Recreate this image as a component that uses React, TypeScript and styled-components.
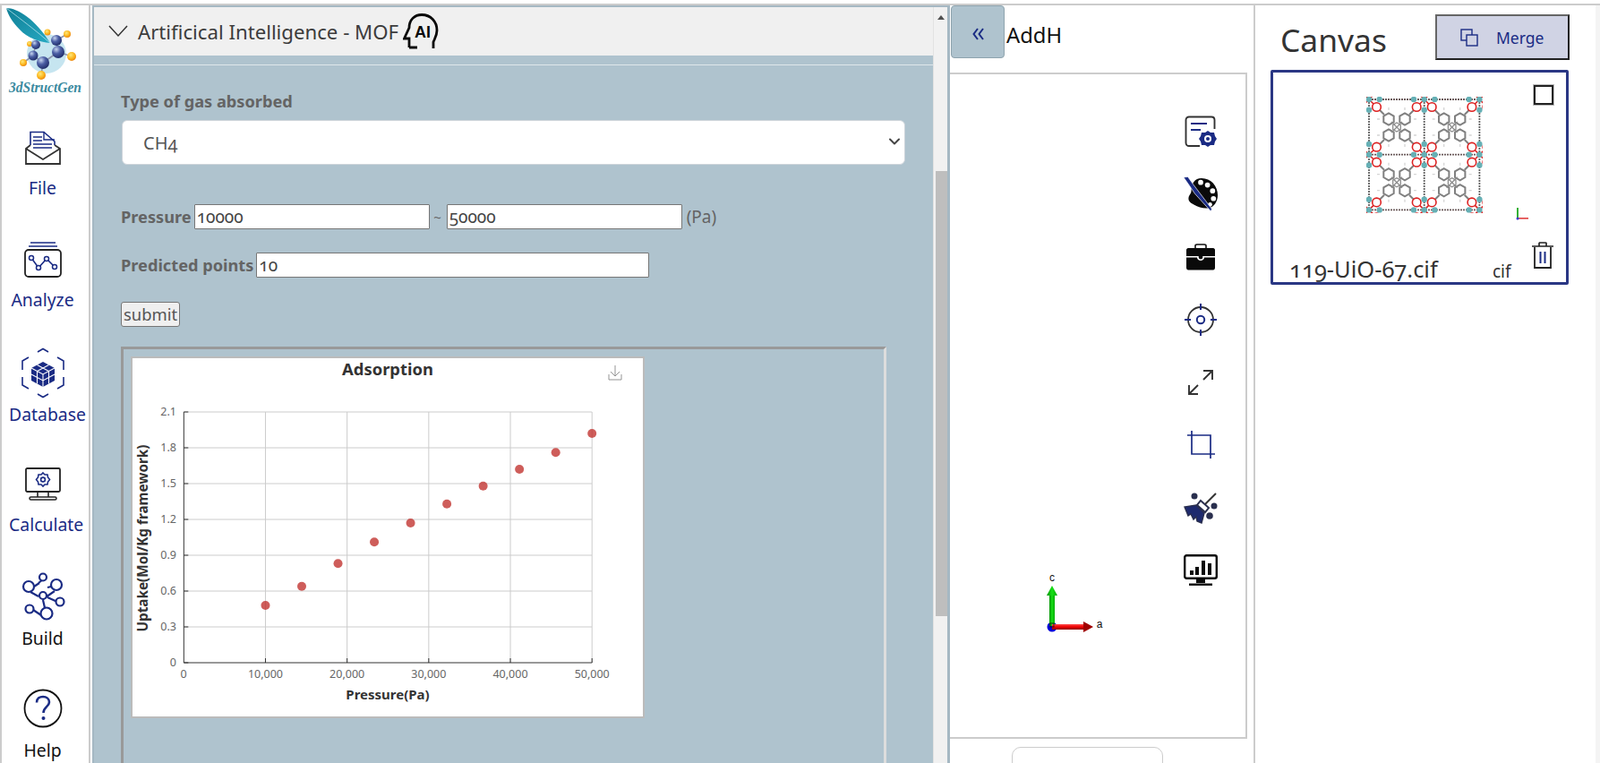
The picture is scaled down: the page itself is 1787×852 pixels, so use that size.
import React from 'react';
import styled, { createGlobalStyle } from 'styled-components';
import { ChevronDown } from 'lucide-react';

const NAVY = '#1a2b84';
const PANEL = '#afc3ce';

const GlobalStyle = createGlobalStyle`
  html, body {
    margin: 0;
    padding: 0;
    background: white;
    overflow: hidden;
  }
  * {
    box-sizing: border-box;
  }
  body, input, select, button {
    font-family: "Noto Sans", "Open Sans", sans-serif;
    font-variant-numeric: oldstyle-nums;
  }
`;

const Page = styled.div`
  display: flex;
  height: 852px;
  padding-top: 4px;
  overflow: hidden;
`;

const Frame = styled.div`
  display: flex;
  flex: 1;
  min-width: 0;
  border-top: 2px solid #ccc;
  border-left: 2px solid #ccc;
`;

const Sidebar = styled.nav`
  width: 99px;
  flex: none;
  border-right: 2px solid #ccc;
  padding-right: 6px;
  display: flex;
  flex-direction: column;
  align-items: center;
  overflow: hidden;
`;

const LogoBox = styled.div`
  width: 97px;
  height: 100px;
  flex: none;
  align-self: flex-start;
`;

const NavItem = styled.div<{ $top: number; $gap: number }>`
  display: flex;
  flex-direction: column;
  align-items: center;
  align-self: stretch;
  flex: none;
  margin-top: ${p => p.$top}px;
  gap: ${p => p.$gap}px;
`;

const NavLabel = styled.span<{ $dark?: boolean; $wide?: boolean }>`
  font-size: 19.4px;
  line-height: 26px;
  white-space: nowrap;
  color: ${p => (p.$dark ? '#111' : NAVY)};
  ${p => p.$wide && 'align-self: flex-start; padding-left: 8px;'}
`;

const Main = styled.section`
  width: 958px;
  flex: none;
  margin-left: 2px;
  display: flex;
  overflow: hidden;
  border-top: 2px solid #a5b8c3;
  border-left: 2px solid #a5b8c3;
  border-right: 3px solid #a5b8c3;
`;

const MainBody = styled.div`
  flex: 1;
  min-width: 0;
  background: ${PANEL};
  overflow: hidden;
`;

const AccordionHead = styled.header`
  height: 54px;
  background: #f0f0f0;
  display: flex;
  align-items: center;
  padding-left: 16px;
  color: #3c3c3c;
  font-size: 22.2px;
`;

const HeadTitle = styled.span`
  margin-left: 11px;
  margin-right: 5px;
  white-space: nowrap;
`;

const Rule = styled.div`
  height: 1px;
  margin-top: 10px;
  background: #dfe7eb;
`;

const Form = styled.div`
  padding: 28px 30px 0 30px;
`;

const FieldLabel = styled.label`
  font-size: 18.2px;
  font-weight: 700;
  color: #646464;
  white-space: nowrap;
`;

const SelectWrap = styled.div`
  position: relative;
  margin-top: 9px;
  width: 875px;
  margin-left: 1px;
`;

const GasSelect = styled.select`
  appearance: none;
  display: block;
  width: 100%;
  height: 50px;
  border: 1px solid #ced4da;
  border-radius: 6px;
  background: white;
  padding-left: 23px;
  font-size: 20px;
  color: #555;
`;

const SelectArrow = styled.span`
  position: absolute;
  right: 2px;
  top: 14px;
  color: #444;
  line-height: 0;
`;

const Row = styled.div<{ $top: number }>`
  display: flex;
  align-items: center;
  margin-top: ${p => p.$top}px;
  height: 28px;
`;

const NumberInput = styled.input<{ $width: number }>`
  width: ${p => p.$width}px;
  height: 28px;
  flex: none;
  margin-left: 3px;
  padding: 0 2px;
  border: 1px solid #767676;
  border-radius: 1px;
  background: white;
  font-size: 19px;
  color: #444;
`;

const Tilde = styled.span`
  width: 16px;
  padding-left: 2px;
  text-align: center;
  color: #666;
  font-size: 15px;
`;

const Unit = styled.span`
  margin-left: 5px;
  font-size: 19px;
  color: #646464;
`;

const SubmitButton = styled.button`
  display: block;
  width: 66px;
  height: 28px;
  margin-top: 27px;
  padding: 0;
  border: 1px solid #767676;
  border-radius: 3px;
  background: #efefef;
  font-size: 18.4px;
  line-height: 24px;
  color: #555;
`;

const ResultFrame = styled.div`
  width: 855px;
  height: 520px;
  margin-top: 22px;
  padding: 10px;
  border-top: 3px solid #999;
  border-left: 3px solid #999;
  border-right: 3px solid #ddd;
`;

const ChartCard = styled.div`
  width: 570px;
  height: 400px;
  background: white;
  box-shadow: 0 0 0 2px #bbb;
`;

const ScrollTrack = styled.div`
  width: 16px;
  flex: none;
  background: #f1f1f1;
  border-left: 1px solid #e2e2e2;
  padding-left: 2px;
`;

const ScrollArrow = styled.div`
  height: 183px;
  padding: 9px 0 0 2px;
`;

const ArrowUp = styled.div`
  width: 0;
  height: 0;
  border-left: 4px solid transparent;
  border-right: 4px solid transparent;
  border-bottom: 5px solid #505050;
`;

const ScrollThumb = styled.div`
  height: 497px;
  background: #bebebe;
`;

const Viewer = styled.section`
  width: 339px;
  flex: none;
  display: flex;
  flex-direction: column;
  overflow: hidden;
`;

const ViewerHead = styled.div`
  display: flex;
  align-items: center;
  height: 75px;
  padding-bottom: 16px;
`;

const CollapseButton = styled.button`
  width: 60px;
  height: 59px;
  margin-left: 1px;
  display: flex;
  align-items: center;
  justify-content: center;
  border: 1px solid #8ea3ae;
  border-radius: 4px;
  background: ${PANEL};
  padding: 4px 0 0;
`;

const ViewerTitle = styled.span`
  margin: 7px 0 0 2px;
  font-size: 23.8px;
  color: #111;
`;

const ViewerBox = styled.div`
  position: relative;
  width: 332px;
  height: 744px;
  flex: none;
  border: 2px solid #ccc;
  border-left: 0;
  display: flex;
  flex-direction: column;
  align-items: flex-end;
  padding: 29px 30px 0 0;
`;

const ToolIcon = styled.div`
  width: 40px;
  height: 70px;
  flex: none;
  display: flex;
  align-items: center;
  justify-content: center;
`;

const AxisMark = styled.div`
  position: absolute;
  left: 95px;
  top: 552px;
  line-height: 0;
`;

const ViewerAction = styled.div`
  width: 169px;
  height: 60px;
  flex: none;
  margin: 9px 0 0 69px;
  border: 1px solid #ccc;
  border-radius: 10px;
`;

const CanvasPane = styled.aside`
  flex: 1;
  min-width: 0;
  border-left: 2px solid #ccc;
  border-right: 5px solid #f4f4f4;
  padding: 10px 0 0 17px;
`;

const CanvasHead = styled.div`
  display: flex;
  align-items: center;
  height: 51px;
`;

const CanvasTitle = styled.h2`
  margin: 4px 0 0 11px;
  width: 173px;
  font-size: 35.4px;
  font-weight: 400;
  line-height: 44px;
  color: #333;
`;

const MergeButton = styled.button`
  width: 150px;
  height: 51px;
  display: flex;
  align-items: center;
  padding: 0 0 0 26px;
  gap: 20px;
  background: #d0d3e4;
  border: 2px solid #222;
  border-top-color: #666;
  border-left-color: #666;
  color: ${NAVY};
  font-size: 17.5px;
`;

const StructureCard = styled.article`
  position: relative;
  width: 333px;
  height: 240px;
  margin-top: 11px;
  border: 3px solid #2a3784;
  border-radius: 2px;
  display: flex;
  flex-direction: column;
  align-items: flex-start;
  overflow: hidden;
`;

const Thumb = styled.div`
  margin: 27px 0 3px 104px;
  width: 130px;
  height: 130px;
  flex: none;
  line-height: 0;
`;

const SelectBox = styled.span`
  position: absolute;
  top: 14px;
  right: 14px;
  width: 22px;
  height: 22px;
  background: white;
  border: 2px solid #222;
  box-shadow: 0 0 0 1px #bbb;
`;

const MiniAxis = styled.span`
  position: absolute;
  left: 271px;
  top: 150px;
  line-height: 0;
`;

const TrashButton = styled.span`
  position: absolute;
  right: 14px;
  top: 189px;
  line-height: 0;
`;

const CardFooter = styled.div`
  display: flex;
  align-items: baseline;
  margin: 44px 0 0 18px;
  color: #333;
`;

const FileName = styled.span`
  width: 227px;
  font-size: 25.5px;
  line-height: 30px;
  white-space: nowrap;
`;

const FileExt = styled.span`
  font-size: 19px;
`;

/* sidebar drawings */

const Logo = () => (
  <svg width="97" height="100" viewBox="2 6 97 100">
    <defs>
      <radialGradient id="ballNavy" cx="35%" cy="30%" r="75%">
        <stop offset="0%" stopColor="#c6d4ef" />
        <stop offset="45%" stopColor="#4c5fa5" />
        <stop offset="100%" stopColor="#1e2a66" />
      </radialGradient>
      <radialGradient id="ballGold" cx="40%" cy="35%" r="70%">
        <stop offset="0%" stopColor="#ffe87a" />
        <stop offset="60%" stopColor="#fbb51c" />
        <stop offset="100%" stopColor="#ea7f10" />
      </radialGradient>
      <linearGradient id="featherFill" x1="0" y1="0" x2="1" y2="1">
        <stop offset="0%" stopColor="#0f7f96" />
        <stop offset="100%" stopColor="#27a9c2" />
      </linearGradient>
    </defs>
    <circle cx="52" cy="60" r="22" fill="#c6e5f0" />
    <path d="M7 9 C20 9 40 22 56 48 C44 47 30 42 22 33 C14 25 9 17 7 9 Z" fill="url(#featherFill)" />
    <path d="M7 9 C24 22 40 34 56 48" stroke="#c9ecf3" strokeWidth="0.7" fill="none" />
    <g stroke="#8d95ad" strokeWidth="1.6">
      <line x1="63" y1="45" x2="65" y2="58" />
      <line x1="40" y1="50" x2="37" y2="62" />
      <line x1="37" y1="62" x2="48" y2="70" />
      <line x1="65" y1="58" x2="48" y2="70" />
      <line x1="65" y1="58" x2="80" y2="63" />
      <line x1="37" y1="62" x2="26" y2="70" />
      <line x1="48" y1="70" x2="46" y2="84" />
      <line x1="63" y1="45" x2="75" y2="38" />
      <line x1="40" y1="50" x2="33" y2="49" />
    </g>
    <circle cx="53" cy="36" r="3.5" fill="url(#ballGold)" />
    <circle cx="75" cy="38" r="4" fill="url(#ballGold)" />
    <circle cx="33" cy="49" r="3" fill="url(#ballGold)" />
    <circle cx="26" cy="70" r="4" fill="url(#ballGold)" />
    <circle cx="80" cy="63" r="5" fill="url(#ballGold)" />
    <circle cx="46" cy="84" r="5" fill="url(#ballGold)" />
    <circle cx="63" cy="45" r="6" fill="url(#ballNavy)" />
    <circle cx="40" cy="50" r="5" fill="url(#ballNavy)" />
    <circle cx="65" cy="58" r="7" fill="url(#ballNavy)" />
    <circle cx="37" cy="62" r="5.5" fill="url(#ballNavy)" />
    <circle cx="48" cy="70" r="7" fill="url(#ballNavy)" />
    <text x="10" y="103" fontFamily="Liberation Serif, serif" fontStyle="italic" fontWeight="700" fontSize="16.5" fill="#3b8a9f" textLength="81" lengthAdjust="spacingAndGlyphs" style={{ fontVariantNumeric: 'lining-nums' }}>3dStructGen</text>
  </svg>
);

const FileIcon = () => (
  <svg width="40" height="38" viewBox="0 0 40 38" fill="none">
    <path d="M6 16 V1.5 H21 L33 12 V16" fill="white" stroke={NAVY} strokeWidth="1.6" />
    <path d="M21 1.5 V10 H33" stroke={NAVY} strokeWidth="1.4" />
    <path d="M9 7 H19 M9 11 H19 M9 15 H30 M9 19 H30" stroke={NAVY} strokeWidth="1.6" />
    <path d="M6 16 L1 20 V37 H39 V20 L33 16" stroke="#333" strokeWidth="1.8" />
    <path d="M1 20 L20 32 L39 20" stroke="#333" strokeWidth="1.8" />
  </svg>
);

const AnalyzeIcon = () => (
  <svg width="42" height="40" viewBox="0 0 42 40" fill="none">
    <path d="M7 1 H35 M5 5 H37" stroke={NAVY} strokeWidth="1.5" />
    <rect x="1" y="9" width="40" height="30" rx="4" stroke="#222" strokeWidth="1.8" />
    <path d="M8 18 L16 29 L25 19 L34 28" stroke={NAVY} strokeWidth="1.6" />
    <g fill="white" stroke={NAVY} strokeWidth="1.5">
      <circle cx="8" cy="18" r="2.5" />
      <circle cx="16" cy="29" r="2.5" />
      <circle cx="25" cy="19" r="2.5" />
      <circle cx="34" cy="28" r="2.5" />
    </g>
  </svg>
);

const DatabaseIcon = () => (
  <svg width="50" height="57" viewBox="0 0 50 57" fill="none">
    <path d="M19 5 L25 1.5 L31 5 M41 11 L48 15 V25 M48 33 V42 L41 46 M31 52 L25 55.5 L19 52 M9 46 L2 42 V33 M2 25 V15 L9 11" stroke={NAVY} strokeWidth="1.6" />
    <path d="M25 16 L38 23 V37 L25 44 L12 37 V23 Z" fill={NAVY} />
    <path d="M12 23 L25 30 L38 23 M25 30 V44 M18.5 19.5 L31.5 26.5 M31.5 19.5 L18.5 26.5 M18.5 26.5 V40.5 M31.5 26.5 V40.5 M12 30 L25 37 L38 30" stroke="white" strokeWidth="1.1" />
  </svg>
);

const CalculateIcon = () => (
  <svg width="40" height="37" viewBox="0 0 40 37" fill="none">
    <rect x="1" y="1" width="38" height="26" rx="1.5" stroke="#222" strokeWidth="1.8" />
    <path d="M14 27 V33 M26 27 V33" stroke="#222" strokeWidth="1.6" />
    <rect x="5" y="33" width="30" height="3" rx="1.5" fill="white" stroke="#222" strokeWidth="1.5" />
    <path d="M20 6 L22 8 L25 8 L25.5 11 L27.5 13.5 L25.5 16 L25 19 L22 19 L20 21 L18 19 L15 19 L14.5 16 L12.5 13.5 L14.5 11 L15 8 L18 8 Z" stroke={NAVY} strokeWidth="1.6" />
    <circle cx="20" cy="13.5" r="2.4" stroke={NAVY} strokeWidth="1.6" />
  </svg>
);

const BuildIcon = () => (
  <svg width="50" height="54" viewBox="0 0 50 54" fill="none" stroke={NAVY} strokeWidth="2.2">
    <path d="M12 18 L21 12 M20 12 L25 8 M30 17 L38 15 M11 22 L20 27 M25 30 L38 21 M30 28 L41 33 M25 31 L28 44 M14 42 L23 48" />
    <circle cx="25" cy="5.5" r="4" fill="white" />
    <circle cx="9" cy="16" r="6" fill="white" />
    <circle cx="40" cy="14" r="6" fill="white" />
    <circle cx="25" cy="26" r="4" fill="white" />
    <circle cx="44" cy="33" r="4.5" fill="white" />
    <circle cx="10" cy="41" r="4.5" fill="white" />
    <circle cx="29" cy="46" r="6.5" fill="white" />
  </svg>
);

const HelpIcon = () => (
  <svg width="44" height="44" viewBox="0 0 44 44" fill="none">
    <circle cx="22" cy="22" r="20.5" stroke="#111" strokeWidth="1.8" />
    <path d="M15 15.5 C15 10.5 18.5 9 22 9 C26 9 29 11.5 29 15 C29 20 22.5 20.5 22.5 27" stroke={NAVY} strokeWidth="2.6" />
    <circle cx="22.5" cy="33" r="2" fill={NAVY} />
  </svg>
);

const AiHeadIcon = () => (
  <svg width="40" height="40" viewBox="0 0 40 40" fill="none">
    <path d="M7 38 H16 M7 38 V28 H1.5 L7 16 C7 7 13 1.5 21 1.5 C31 1.5 38 9 38 19 C38 25 35 29 34 32 V39" stroke="#0a0a0a" strokeWidth="2.8" />
    <text x="22" y="27" textAnchor="middle" fontFamily="Liberation Sans, sans-serif" fontWeight="700" fontSize="18" fill="#0a0a0a">AI</text>
  </svg>
);

const DoubleLeft = () => (
  <svg width="13" height="14" viewBox="0 0 13 14" fill="none" stroke={NAVY} strokeWidth="2">
    <path d="M6 1 L1.5 7 L6 13 M12 1 L7.5 7 L12 13" />
  </svg>
);

/* viewer tools */

const SettingsDocIcon = () => (
  <svg width="36" height="36" viewBox="0 0 36 36" fill="none">
    <path d="M17 34 H5 C3 34 1.5 32.5 1.5 30.5 V5 C1.5 3 3 1.5 5 1.5 H30 C32 1.5 33.5 3 33.5 5 V15" stroke="#333" strokeWidth="1.9" />
    <path d="M7 9 H25 M7 16 H18" stroke={NAVY} strokeWidth="2" />
    <path d="M26 17 L29 19 L33 19 L34 23 L36 26 L34 29 L33 33 L29 33 L26 35 L23 33 L19 33 L18 29 L16 26 L18 23 L19 19 L23 19 Z" fill={NAVY} />
    <circle cx="26" cy="26" r="4" fill="white" />
    <circle cx="26" cy="26" r="2" fill={NAVY} />
  </svg>
);

const PaletteIcon = () => (
  <svg width="42" height="42" viewBox="0 0 42 42">
    <path d="M22 2 C33 2 41 11 41 22 C41 30 36 36 31 37 C24 38 19 36 13 33 C8 31 6 28 7 24 C8 21 10 20 10 17 C10 8 14 2 22 2 Z" fill="#0a0a0a" />
    <g fill="white">
      <circle cx="21" cy="7" r="3" />
      <circle cx="29" cy="10" r="3" />
      <circle cx="35" cy="17" r="3" />
      <circle cx="36" cy="26" r="3" />
      <circle cx="32" cy="33" r="2.5" />
    </g>
    <path d="M1 1 L6 0.5 L12 9 L34 38 L33 41 L14 20 L8 11 Z" fill={NAVY} stroke="white" strokeWidth="0.7" />
  </svg>
);

const CaseIcon = () => (
  <svg width="32" height="30" viewBox="0 0 32 30">
    <path d="M10 6 V2.5 C10 1.5 11 1 12 1 H20 C21 1 22 1.5 22 2.5 V6" fill="none" stroke="#111" strokeWidth="1.6" />
    <path d="M2 5 H30 C31 5 32 6 32 7 V14 H0 V7 C0 6 1 5 2 5 Z" fill="#0a0a0a" />
    <path d="M0 15.5 H12 C12 20 20 20 20 15.5 H32 V27 C32 28.5 31 29.5 30 29.5 H2 C1 29.5 0 28.5 0 27 Z" fill="#0a0a0a" />
    <circle cx="16" cy="15" r="2.4" fill="#0a0a0a" />
  </svg>
);

const TargetIcon = () => (
  <svg width="38" height="38" viewBox="0 0 38 38" fill="none">
    <circle cx="19" cy="19" r="14" stroke="#333" strokeWidth="1.8" />
    <circle cx="19" cy="19" r="4.2" stroke={NAVY} strokeWidth="2" />
    <path d="M19 1 V8 M19 30 V37 M1 19 H8 M30 19 H37" stroke={NAVY} strokeWidth="2" />
  </svg>
);

const ExpandIcon = () => (
  <svg width="30" height="30" viewBox="0 0 30 30" fill="none" stroke="#333" strokeWidth="1.9">
    <path d="M18 12 L28 2 M18 2 H28 V12 M12 18 L2 28 M2 18 V28 H12" />
  </svg>
);

const CropIcon = () => (
  <svg width="32" height="32" viewBox="0 0 32 32" fill="none" stroke={NAVY} strokeWidth="1.7">
    <path d="M1 5 H27 V31 M6 0 V26 H32" />
  </svg>
);

const BroomIcon = () => (
  <svg width="38" height="36" viewBox="0 0 38 36">
    <line x1="24" y1="14" x2="36" y2="2" stroke="#333" strokeWidth="2" />
    <path d="M19 10 L28 18 L24 23 L15 15 Z" fill="white" stroke="#2a2f4e" strokeWidth="2" />
    <path d="M14 15 L23 24 L20 35 L15 33 L14 28 L11 31 L8 25 L5 27 L1 17 Z" fill="#1e2a6e" stroke="#2a2f4e" strokeWidth="1.4" />
    <circle cx="12" cy="5" r="3.5" fill="#2a2f4e" />
    <circle cx="34" cy="16" r="3.5" fill="#2a2f4e" />
    <circle cx="29" cy="27" r="3.8" fill="#2a2f4e" />
  </svg>
);

const StatsIcon = () => (
  <svg width="38" height="36" viewBox="0 0 38 36" fill="none">
    <rect x="1.2" y="1.2" width="35.6" height="25.6" rx="2" stroke="#0a0a0a" strokeWidth="2.4" />
    <path d="M7 18 H11 V23 H7 Z M13 14 H17 V23 H13 Z M20 7 H24 V23 H20 Z M27 10 H31 V23 H27 Z" fill="#0a0a0a" />
    <path d="M14 28 H24 V32 H14 Z" fill="#0a0a0a" />
    <rect x="6" y="32.5" width="26" height="2.4" fill="#0a0a0a" />
  </svg>
);

const AxisGizmo = () => (
  <svg width="80" height="76" viewBox="0 -6 80 76">
    <defs>
      <linearGradient id="arrowRed" x1="0" y1="0" x2="0" y2="1">
        <stop offset="0%" stopColor="#ff5050" />
        <stop offset="50%" stopColor="#ef0000" />
        <stop offset="100%" stopColor="#8a0000" />
      </linearGradient>
      <linearGradient id="arrowGreen" x1="0" y1="0" x2="1" y2="0">
        <stop offset="0%" stopColor="#009000" />
        <stop offset="50%" stopColor="#16e016" />
        <stop offset="100%" stopColor="#00a800" />
      </linearGradient>
    </defs>
    <circle cx="19" cy="59" r="5.5" fill="#0000d8" />
    <rect x="16" y="24" width="6" height="34" fill="url(#arrowGreen)" />
    <path d="M13 24 L19 13 L25 24 Z" fill="url(#arrowGreen)" />
    <rect x="19" y="56" width="35" height="6" fill="url(#arrowRed)" />
    <path d="M54 53 L65 59 L54 65 Z" fill="#a00000" />
    <rect x="17" y="55" width="4" height="4" fill="none" stroke="#111" strokeWidth="0.8" />
    <text x="19" y="8" textAnchor="middle" fontFamily="Liberation Sans, sans-serif" fontSize="12" fill="#111">c</text>
    <text x="72" y="60" textAnchor="middle" fontFamily="Liberation Sans, sans-serif" fontSize="12" fill="#111">a</text>
  </svg>
);

/* canvas pane */

const MergeIcon = () => (
  <svg width="20" height="20" viewBox="0 0 20 20" fill="none" stroke={NAVY} strokeWidth="1.4">
    <rect x="1" y="1" width="12" height="12" />
    <rect x="7" y="7" width="12" height="12" fill="#d0d3e4" />
  </svg>
);

const TrashIcon = () => (
  <svg width="24" height="30" viewBox="0 0 24 30" fill="none">
    <path d="M0 5 H24 M8 5 V2 C8 1 9 1 9 1 H15 C15 1 16 1 16 1.5 V5" stroke="#222" strokeWidth="1.7" />
    <path d="M3 6 V29 H21 V6" stroke="#222" strokeWidth="1.8" />
    <path d="M9.5 11 V24 M14.5 11 V24" stroke={NAVY} strokeWidth="2" />
  </svg>
);

const MiniAxisIcon = () => (
  <svg width="16" height="16" viewBox="0 0 16 16">
    <rect x="1" y="1" width="2" height="12" fill="#35b035" />
    <rect x="2" y="12" width="12" height="1.6" fill="#e04040" />
    <circle cx="2" cy="13" r="1.5" fill="#3a3ad0" />
  </svg>
);

const CELL = 61.7;
const HEXES: Array<[number, number]> = [[22, 22], [40, 22], [22, 40], [40, 40]];
const hexPoints = (cx: number, cy: number, r: number) =>
  Array.from({ length: 6 }, (_, i) => {
    const a = (Math.PI / 3) * i + Math.PI / 6;
    return `${(cx + r * Math.cos(a)).toFixed(1)},${(cy + r * Math.sin(a)).toFixed(1)}`;
  }).join(' ');

const Linker = ({ x, y }: { x: number; y: number }) => (
  <g transform={`translate(${x} ${y})`}>
    <g fill="none" stroke="#808080" strokeWidth="2">
      {HEXES.map(([cx, cy]) => (
        <polygon key={`${cx}-${cy}`} points={hexPoints(cx, cy, 6.6)} />
      ))}
      <path d="M17 17 L12 12 M45 17 L50 12 M17 45 L12 50 M45 45 L50 50" />
    </g>
    <g fill="none" stroke="#8c8c8c" strokeWidth="1.3">
      <polygon points={hexPoints(31, 31, 5)} />
      <path d="M25 25 L37 37 M37 25 L25 37" />
    </g>
    <path d="M22 12 V9 M40 12 V9 M12 22 H9 M50 22 H53 M12 40 H9 M50 40 H53 M22 50 V53 M40 50 V53" stroke="#d5d5d5" strokeWidth="1.3" />
  </g>
);

const Corner = ({ x, y }: { x: number; y: number }) => (
  <g transform={`translate(${x} ${y})`}>
    <g fill="none" stroke="#dc2020" strokeWidth="1.6">
      {[[-1, -1], [1, -1], [-1, 1], [1, 1]].map(([sx, sy]) => (
        <g key={`${sx}${sy}`}>
          <circle cx={sx * 8.5} cy={sy * 8.5} r="4.8" />
          <path d={`M0 0 L${sx * 5} ${sy * 5}`} />
        </g>
      ))}
    </g>
  </g>
);

const Nodes = ({ x, y }: { x: number; y: number }) => (
  <g transform={`translate(${x} ${y})`} fill="#66b0b5">
    {[[0, 0], [11.7, 0], [-11.7, 0], [0, 11.7], [0, -11.7]].map(([dx, dy]) => (
      <circle key={`${dx}/${dy}`} cx={dx} cy={dy} r="3.2" />
    ))}
  </g>
);

const MoleculeThumb = () => {
  const stops = [0, CELL, CELL * 2];
  return (
    <svg width="130" height="130" viewBox="-3 -3 130 130">
      <defs>
        <clipPath id="cellClip">
          <rect x="-3" y="-3" width="130" height="130" />
        </clipPath>
        <filter id="soft">
          <feGaussianBlur stdDeviation="0.3" />
        </filter>
      </defs>
      <g filter="url(#soft)" clipPath="url(#cellClip)">
        {stops.map(s => (
          <g key={s}>
            <line x1="0" y1={s} x2="123.4" y2={s} stroke="#6c5c5c" strokeWidth="1.8" strokeDasharray="2 1" />
            <line x1={s} y1="0" x2={s} y2="123.4" stroke="#626262" strokeWidth="1.8" strokeDasharray="2 1" />
          </g>
        ))}
        <Linker x={0} y={0} />
        <Linker x={CELL} y={0} />
        <Linker x={0} y={CELL} />
        <Linker x={CELL} y={CELL} />
        {stops.map(x => stops.map(y => (
          <Corner key={`c${x}-${y}`} x={x} y={y} />
        )))}
        {stops.map(x => stops.map(y => (
          <Nodes key={`n${x}-${y}`} x={x} y={y} />
        )))}
      </g>
    </svg>
  );
};

/* chart */

const PLOT = { left: 57.3, right: 513.2, top: 60, bottom: 340 };
const UPTAKE = [0.48, 0.64, 0.83, 1.01, 1.17, 1.33, 1.48, 1.62, 1.76, 1.92];
const xPos = (v: number) => PLOT.left + (v / 50000) * (PLOT.right - PLOT.left);
const yPos = (v: number) => PLOT.bottom - (v / 2.1) * (PLOT.bottom - PLOT.top);

const AdsorptionChart = () => (
  <svg width="570" height="400" viewBox="0 0 570 400" style={{ display: 'block', fontFamily: '"Noto Sans", sans-serif', fontVariantNumeric: 'lining-nums' }}>
    <text x="285" y="19" textAnchor="middle" fontSize="18.4" fontWeight="700" fill="#333">Adsorption</text>
    <path d="M539 8 V20 M534 15 L539 20 L544 15 M532 18 V24 H546 V18" fill="none" stroke="#888" strokeWidth="0.9" />
    {[0.3, 0.6, 0.9, 1.2, 1.5, 1.8, 2.1].map(v => (
      <line key={v} x1={PLOT.left} x2={PLOT.right} y1={yPos(v)} y2={yPos(v)} stroke="#ccc" strokeWidth="1" />
    ))}
    {[10000, 20000, 30000, 40000, 50000].map(v => (
      <g key={v}>
        <line x1={xPos(v)} x2={xPos(v)} y1={PLOT.top} y2={PLOT.bottom} stroke="#ccc" strokeWidth="1" />
        <line x1={xPos(v)} x2={xPos(v)} y1={PLOT.bottom - 5} y2={PLOT.bottom} stroke="#333" strokeWidth="1" />
        <text x={xPos(v)} y={357} textAnchor="middle" fontSize="12.5" fill="#666">{v.toLocaleString('en-US')}</text>
      </g>
    ))}
    <line x1={PLOT.left} x2={PLOT.left} y1={PLOT.top} y2={PLOT.bottom} stroke="#333" strokeWidth="1" />
    <line x1={PLOT.left} x2={PLOT.right} y1={PLOT.bottom} y2={PLOT.bottom} stroke="#333" strokeWidth="1" />
    {[0, 0.3, 0.6, 0.9, 1.2, 1.5, 1.8, 2.1].map(v => (
      <g key={v}>
        <line x1={PLOT.left} x2={PLOT.left + 5} y1={yPos(v)} y2={yPos(v)} stroke="#333" strokeWidth="1" />
        <text x="49" y={yPos(v) + 4} textAnchor="end" fontSize="12.5" fill="#666">{v}</text>
      </g>
    ))}
    <text x="57" y="357" textAnchor="middle" fontSize="12.5" fill="#666">0</text>
    {UPTAKE.map((v, i) => (
      <circle key={v} cx={xPos(10000 + i * (40000 / 9))} cy={yPos(v)} r="5" fill="#c23531" fillOpacity="0.8" />
    ))}
    <text x="285" y="381" textAnchor="middle" fontSize="15" fontWeight="700" fill="#333">Pressure(Pa)</text>
    <text transform="translate(17 201) rotate(-90)" textAnchor="middle" fontSize="15.3" fontWeight="700" fill="#333">Uptake(Mol/Kg framework)</text>
  </svg>
);

const App = () => (
  <>
    <GlobalStyle />
    <Page>
      <Frame>
        <Sidebar>
          <LogoBox><Logo /></LogoBox>
          <NavItem $top={40} $gap={13}>
            <FileIcon />
            <NavLabel>File</NavLabel>
          </NavItem>
          <NavItem $top={47} $gap={12}>
            <AnalyzeIcon />
            <NavLabel>Analyze</NavLabel>
          </NavItem>
          <NavItem $top={40} $gap={5}>
            <DatabaseIcon />
            <NavLabel $wide>Database</NavLabel>
          </NavItem>
          <NavItem $top={46} $gap={14}>
            <CalculateIcon />
            <NavLabel $wide>Calculate</NavLabel>
          </NavItem>
          <NavItem $top={40} $gap={7}>
            <BuildIcon />
            <NavLabel $dark>Build</NavLabel>
          </NavItem>
          <NavItem $top={43} $gap={12}>
            <HelpIcon />
            <NavLabel $dark>Help</NavLabel>
          </NavItem>
        </Sidebar>

        <Main>
          <MainBody>
            <AccordionHead>
              <svg width="22" height="14" viewBox="0 0 22 14" fill="none" stroke="#333" strokeWidth="1.5">
                <path d="M1 1 L11 12 L21 1" />
              </svg>
              <HeadTitle>Artificical Intelligence - MOF</HeadTitle>
              <AiHeadIcon />
            </AccordionHead>
            <Rule />
            <Form>
              <FieldLabel>Type of gas absorbed</FieldLabel>
              <SelectWrap>
                <GasSelect defaultValue="CH4">
                  <option value="CH4">CH4</option>
                  <option value="CO2">CO2</option>
                </GasSelect>
                <SelectArrow><ChevronDown size={20} strokeWidth={2.4} /></SelectArrow>
              </SelectWrap>
              <Row $top={44}>
                <FieldLabel>Pressure</FieldLabel>
                <NumberInput $width={263} readOnly value="10000" />
                <Tilde>~</Tilde>
                <NumberInput $width={263} readOnly value="50000" />
                <Unit>(Pa)</Unit>
              </Row>
              <Row $top={26}>
                <FieldLabel>Predicted points</FieldLabel>
                <NumberInput $width={439} readOnly value="10" />
              </Row>
              <SubmitButton>submit</SubmitButton>
              <ResultFrame>
                <ChartCard>
                  <AdsorptionChart />
                </ChartCard>
              </ResultFrame>
            </Form>
          </MainBody>
          <ScrollTrack>
            <ScrollArrow><ArrowUp /></ScrollArrow>
            <ScrollThumb />
          </ScrollTrack>
        </Main>

        <Viewer>
          <ViewerHead>
            <CollapseButton><DoubleLeft /></CollapseButton>
            <ViewerTitle>AddH</ViewerTitle>
          </ViewerHead>
          <ViewerBox>
            <ToolIcon><SettingsDocIcon /></ToolIcon>
            <ToolIcon><PaletteIcon /></ToolIcon>
            <ToolIcon><CaseIcon /></ToolIcon>
            <ToolIcon><TargetIcon /></ToolIcon>
            <ToolIcon><ExpandIcon /></ToolIcon>
            <ToolIcon><CropIcon /></ToolIcon>
            <ToolIcon><BroomIcon /></ToolIcon>
            <ToolIcon><StatsIcon /></ToolIcon>
            <AxisMark><AxisGizmo /></AxisMark>
          </ViewerBox>
          <ViewerAction />
        </Viewer>

        <CanvasPane>
          <CanvasHead>
            <CanvasTitle>Canvas</CanvasTitle>
            <MergeButton>
              <MergeIcon />
              Merge
            </MergeButton>
          </CanvasHead>
          <StructureCard>
            <Thumb><MoleculeThumb /></Thumb>
            <SelectBox />
            <MiniAxis><MiniAxisIcon /></MiniAxis>
            <TrashButton><TrashIcon /></TrashButton>
            <CardFooter>
              <FileName>119-UiO-67.cif</FileName>
              <FileExt>cif</FileExt>
            </CardFooter>
          </StructureCard>
        </CanvasPane>
      </Frame>
    </Page>
  </>
);

export default App;
